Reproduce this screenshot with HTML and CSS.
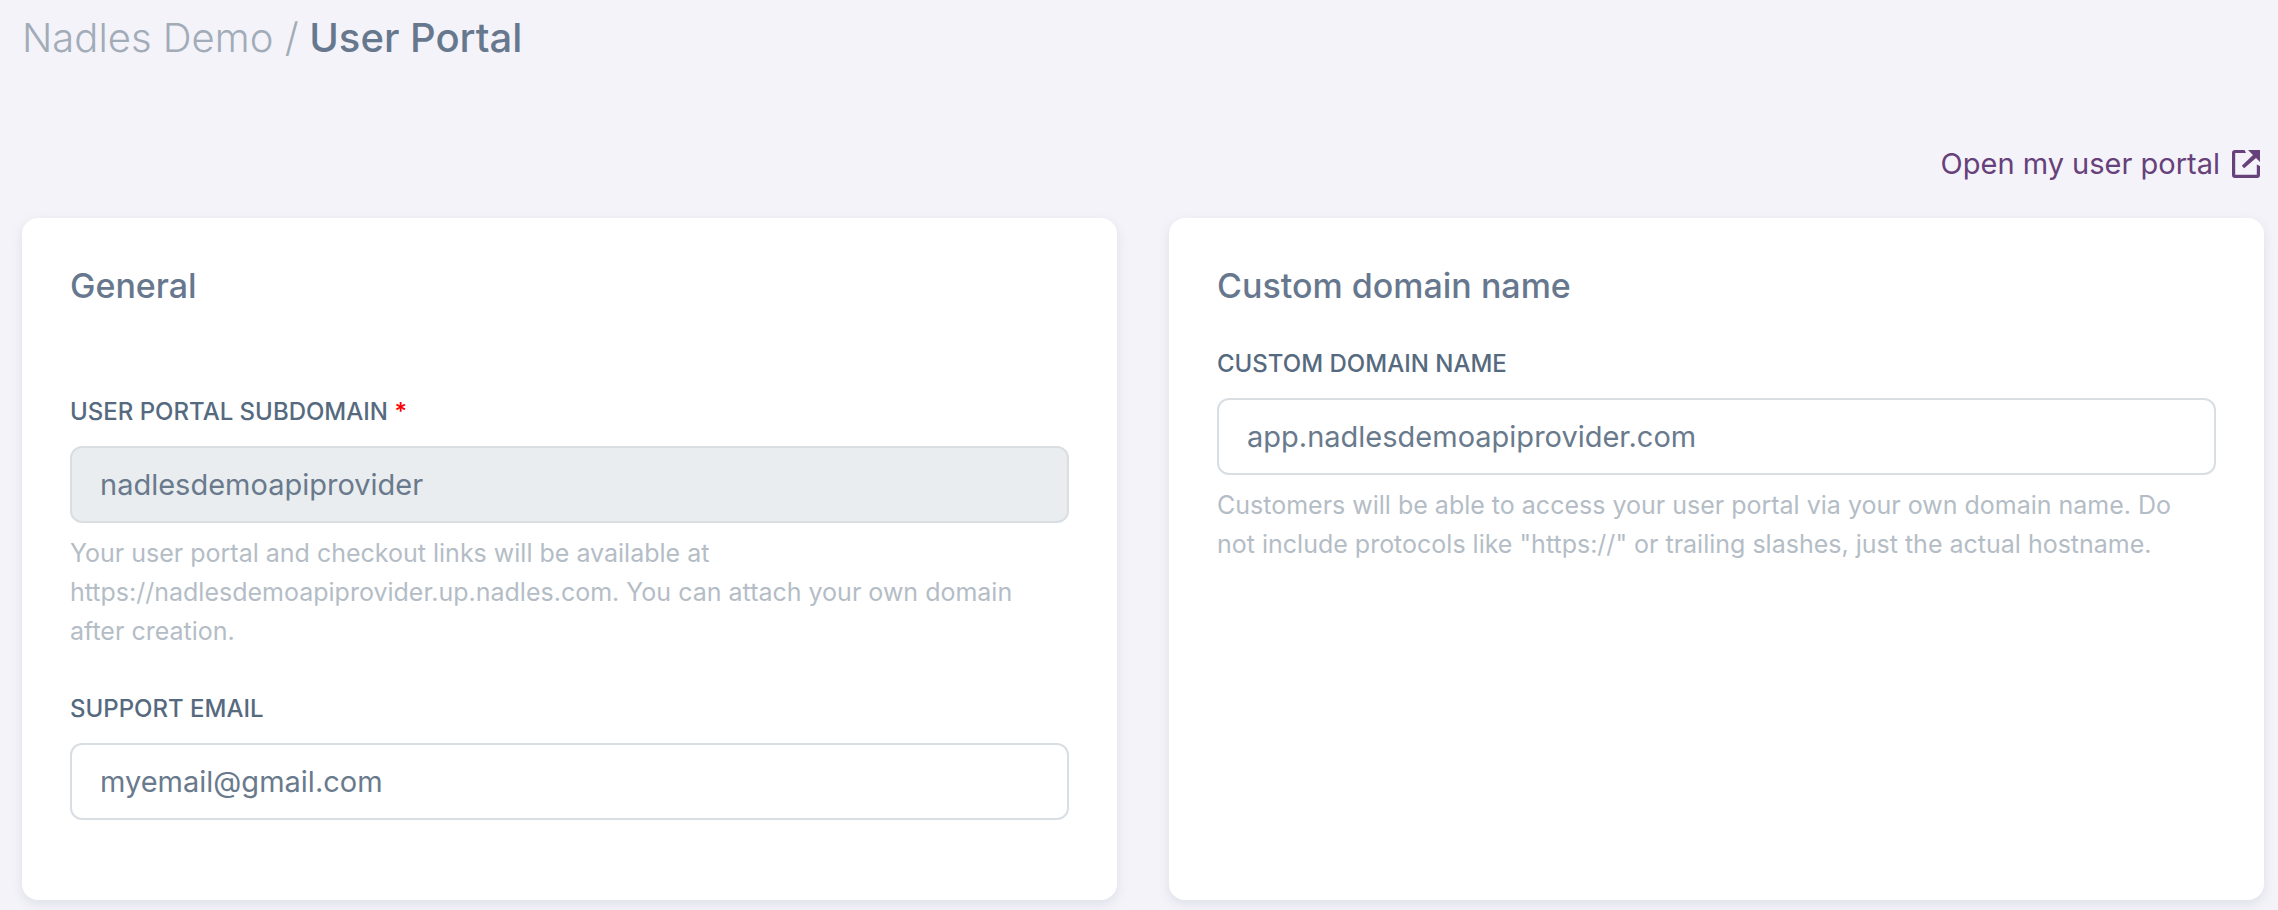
FILE: index.html
```html
<!DOCTYPE html>
<html lang="en">
<head>
<meta charset="utf-8">
<meta name="viewport" content="width=device-width, initial-scale=1">
<title>User Portal</title>
<link rel="stylesheet" href="styles.css">
</head>
<body>
<main class="page">
  <h1 class="page-title"><span class="page-title-parent">Nadles Demo /</span> User Portal</h1>
  <div class="actions">
    <a class="portal-link" href="#">Open my user portal
      <svg class="portal-icon" viewBox="0 0 28 28" fill="currentColor" aria-hidden="true">
        <path d="M3 0h9.500l1.500 3H3.200v21.800h21.600V14.500l3.200 1.500v9a3 3 0 0 1-3 3H3a3 3 0 0 1-3-3V3a3 3 0 0 1 3-3z"/>
        <path d="M16 0h12v12l-4-4L12.200 18.200l-2.400-2.400L21 5z"/>
      </svg>
    </a>
  </div>
  <form class="cards">
    <section class="card">
      <h2 class="card-title">General</h2>
      <div class="fields fields-spaced">
        <div class="field">
          <label class="label" for="subdomain">User portal subdomain <span class="required">*</span></label>
          <input class="input" id="subdomain" type="text" value="nadlesdemoapiprovider" disabled>
          <p class="help">Your user portal and checkout links will be available at https://nadlesdemoapiprovider.up.nadles.com. You can attach your own domain after creation.</p>
        </div>
        <div class="field">
          <label class="label" for="email">Support email</label>
          <input class="input" id="email" type="email" value="myemail@gmail.com">
        </div>
      </div>
    </section>
    <section class="card">
      <h2 class="card-title">Custom domain name</h2>
      <div class="fields">
        <div class="field">
          <label class="label" for="domain">Custom domain name</label>
          <input class="input" id="domain" type="text" value="app.nadlesdemoapiprovider.com">
          <p class="help">Customers will be able to access your user portal via your own domain name. Do not include protocols like "https://" or trailing slashes, just the actual hostname.</p>
        </div>
      </div>
    </section>
  </form>
</main>
</body>
</html>
```
FILE: styles.css
```css
* {
  box-sizing: border-box;
}

body {
  margin: 0;
  background: #f4f3f9;
  color: #67788e;
  font-family: Inter, "Liberation Sans", sans-serif;
}

.page {
  padding: 12px 14px 10px 22px;
}

.page-title {
  margin: 0;
  font-size: 40px;
  font-weight: 500;
  line-height: 52px;
}

.page-title-parent {
  color: #a1acb8;
  font-weight: 300;
}

.actions {
  display: flex;
  justify-content: flex-end;
  margin: 78px 4px 32px 0;
}

.portal-link {
  display: flex;
  align-items: center;
  gap: 12px;
  color: #66417a;
  font-size: 29px;
  line-height: 44px;
  text-decoration: none;
}

.portal-icon {
  width: 28px;
  height: 28px;
}

.cards {
  display: grid;
  grid-template-columns: 1fr 1fr;
  gap: 52px;
}

.card {
  padding: 48px 48px 80px;
  border-radius: 16px;
  background: #fff;
  box-shadow: 0 4px 12px rgba(67, 89, 113, 0.12);
}

.card-title {
  margin: 0;
  font-size: 34px;
  font-weight: 500;
  line-height: 40px;
}

.fields {
  display: flex;
  flex-direction: column;
  gap: 40px;
  margin-top: 40px;
}

.fields-spaced {
  margin-top: 88px;
}

.field {
  display: flex;
  flex-direction: column;
}

.label {
  margin-bottom: 16px;
  color: #566a7f;
  font-size: 24px;
  font-weight: 500;
  line-height: 36px;
  text-transform: uppercase;
}

.required {
  color: #f00;
}

.input {
  width: 100%;
  height: 77px;
  padding: 0 28px;
  border: 2px solid #d9dee3;
  border-radius: 12px;
  background: #fff;
  color: #697a8d;
  font-family: inherit;
  font-size: 29px;
}

.input:disabled {
  background: #e9edf0;
}

.help {
  margin: 11px 0 0;
  color: #b4bdc6;
  font-size: 25px;
  line-height: 39px;
}
```
